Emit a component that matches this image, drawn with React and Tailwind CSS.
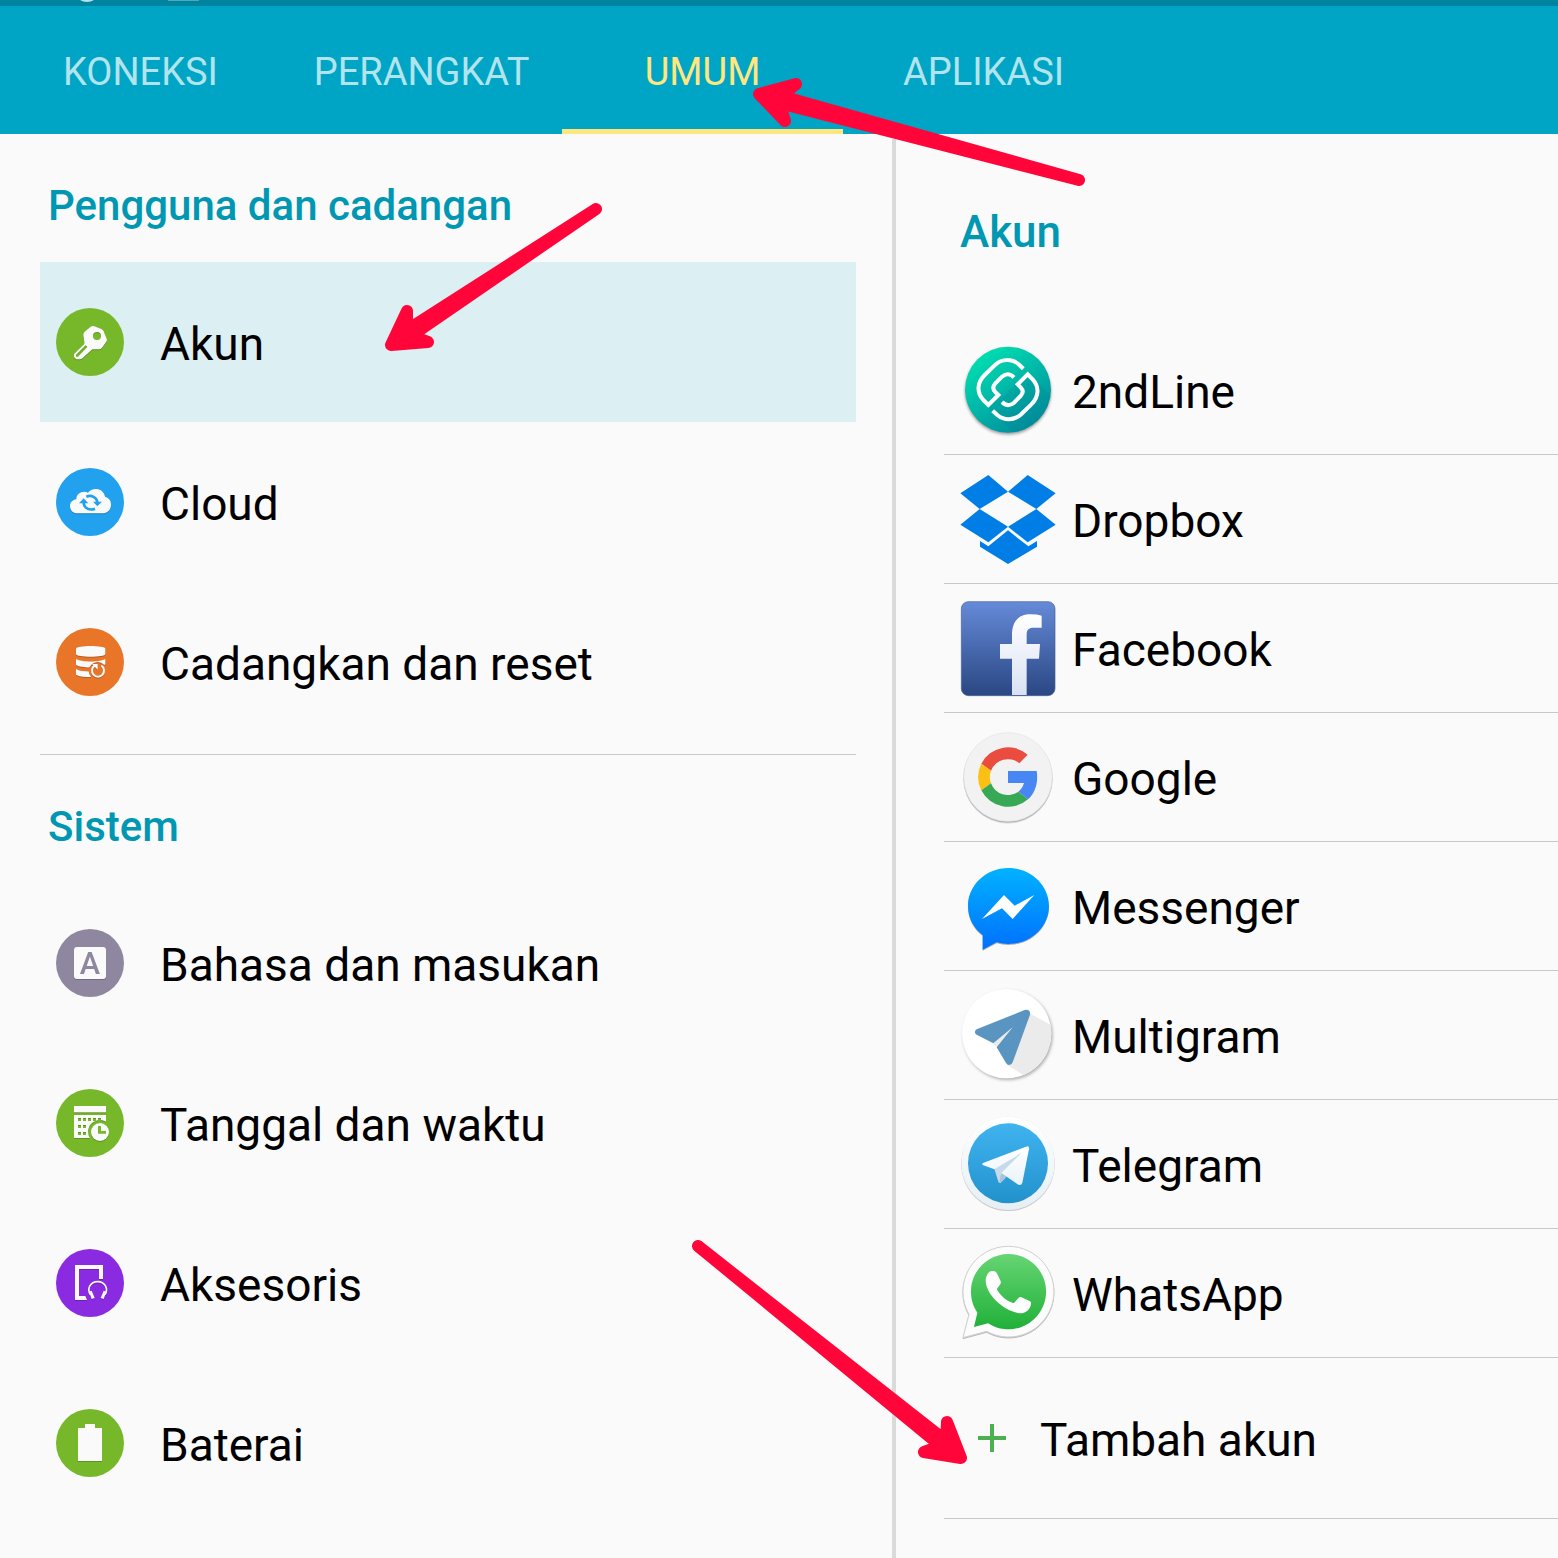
import { useState } from 'react';
import clsx from 'clsx';

/* Settings icons: 204 x 204 drawings on a coloured disc */

const SettingIcon = ({ color, children }) => (
  <svg viewBox="0 0 204 204" className="size-[68px] shrink-0" aria-hidden="true">
    <circle cx="102" cy="102" r="102" fill={color} />
    <g fill="#fafafa" className="drop-shadow-[0_2px_1px_rgba(0,0,0,0.3)]">
      {children}
    </g>
  </svg>
);

const KeyIcon = () => (
  <SettingIcon color="#76b82a">
    <path
      fillRule="evenodd"
      d="M104 56Q109 52 115 55L136 63Q141 65 143 70L152 92Q154 97 151 101L138 119Q134 124 128 124H109L80 150Q76 154 71 154H61L54 147V138L83 110Q86 107 85 102L82 82Q81 76 86 71ZM123 72a12 12 0 1 0 0 24a12 12 0 1 0 0-24ZM60 141V146H66L94 117L89 112Z"
    />
  </SettingIcon>
);

const CloudIcon = () => (
  <SettingIcon color="#21a1ee">
    <path d="M64 136C50 136 42 126 42 114C42 103 50 96 61 94C61 76 80 67 96 74C106 58 142 57 147 86C159 89 165 99 165 110C165 126 154 136 140 136Z" />
    <g fill="none" stroke="#21a1ee" strokeWidth="8">
      <path d="M91 86C106 80 123 88 124 103" />
      <path d="M117 122C101 129 84 120 83 105" />
    </g>
    <path fill="#21a1ee" d="M111 101H138L124 115ZM69 106H97L83 91Z" />
  </SettingIcon>
);

const BackupIcon = () => (
  <SettingIcon color="#e97528">
    <mask id="backup-gap">
      <rect width="204" height="204" fill="#fff" />
      <circle cx="125" cy="129" r="27" fill="#000" />
    </mask>
    <g mask="url(#backup-gap)">
      <path d="M60 62C60 51 148 51 148 62V78C148 89 60 89 60 78Z" />
      <path d="M60 93C76 103 132 103 148 93V109C132 121 76 121 60 111Z" />
      <path d="M60 123C72 130 92 131 110 130V147C90 148 68 146 60 140Z" />
    </g>
    <path d="M116 113A18 18 0 1 0 136 113" fill="none" stroke="#fafafa" strokeWidth="6" />
    <path d="M108 108H125V125Z" />
  </SettingIcon>
);

const LanguageIcon = () => (
  <SettingIcon color="#8f879f">
    <rect x="54" y="54" width="96" height="96" rx="9" />
    <text x="102" y="135" textAnchor="middle" fill="#8f879f" className="font-['Roboto'] text-[92px] font-medium">
      A
    </text>
  </SettingIcon>
);

const CALENDAR_DOTS = [
  [66, 87], [81, 87], [96, 87], [111, 87], [126, 87],
  [66, 108], [81, 108],
  [66, 129], [81, 129],
];

const CalendarIcon = () => (
  <SettingIcon color="#76b82a">
    <mask id="calendar-gap">
      <rect width="204" height="204" fill="#fff" />
      {CALENDAR_DOTS.map(([x, y]) => (
        <rect key={`${x}-${y}`} x={x} y={y} width="9" height="9" fill="#000" />
      ))}
      <circle cx="132" cy="129" r="36" fill="#000" />
    </mask>
    <rect x="54" y="51" width="96" height="19" />
    <rect x="54" y="78" width="96" height="69" mask="url(#calendar-gap)" />
    <circle cx="132" cy="129" r="27" />
    <path fill="#76b82a" d="M126 111H135V126H150V134H126Z" />
  </SettingIcon>
);

const AccessoryIcon = () => (
  <SettingIcon color="#8a2be2">
    <path d="M57 48H141V90H129V60H69V141H88L93 153H57Z" />
    <path
      d="M103 137C92 119 103 98 125 98C147 98 158 119 147 137"
      fill="none"
      stroke="#fafafa"
      strokeWidth="5"
    />
    <path d="M99 128L107 125L116 147L107 150ZM151 128L143 125L134 147L143 150Z" />
  </SettingIcon>
);

const BatteryIcon = () => (
  <SettingIcon color="#76b82a">
    <path d="M87 45H117V57H138V156H66V57H87Z" />
  </SettingIcon>
);

/* Account logos: 288 x 288 drawings */

const Logo = ({ children }) => (
  <svg viewBox="0 0 288 288" className="size-24 shrink-0 overflow-visible" aria-hidden="true">
    {children}
  </svg>
);

const Gradient = ({ id, from, to, diagonal }) => (
  <linearGradient id={id} x1={diagonal ? '0.2' : '0'} y1={diagonal ? '0.1' : '0'} x2={diagonal ? '0.8' : '0'} y2="1">
    <stop offset="0" stopColor={from} />
    <stop offset="1" stopColor={to} />
  </linearGradient>
);

const LINK_HALF =
  'M190 80L176 67C156 50 126 50 106 68L74 99C50 123 50 152 70 174L85 189L115 159L106 150C98 142 98 133 106 124L126 104C138 94 150 94 162 106';

const SecondLineLogo = () => (
  <Logo>
    <defs>
      <Gradient id="second-line" from="#00dcb0" to="#008a9c" diagonal />
    </defs>
    <circle cx="144" cy="143" r="129" fill="url(#second-line)" className="drop-shadow-[0_5px_4px_rgba(0,0,0,0.4)]" />
    <path d="M205 94L271 160C262 220 215 262 158 271L85 198Z" fill="#007c92" opacity="0.2" />
    <g fill="none" stroke="#fff" strokeWidth="12">
      <path d={LINK_HALF} />
      <path d={LINK_HALF} transform="rotate(180 144 143)" />
    </g>
  </Logo>
);

const DropboxLogo = () => (
  <Logo>
    <path
      fill="#007ee5"
      d="M85 12L144 62L59 114L1 67ZM203 12L144 62L229 114L287 67ZM59 114L144 167L85 214L1 161ZM229 114L144 167L203 214L287 161ZM144 178L205 226L231 210V227L144 279L60 227V210L85 226Z"
    />
  </Logo>
);

const FacebookLogo = () => (
  <Logo>
    <defs>
      <Gradient id="facebook" from="#658ad8" to="#2a4783" />
      <Gradient id="facebook-f" from="#ffffff" to="#d9e1f2" />
    </defs>
    <rect x="4" y="5" width="281" height="282" rx="21" fill="url(#facebook)" stroke="#4a5f92" strokeWidth="2" />
    <path
      fill="url(#facebook-f)"
      d="M156 285V176H120V132H156V104C156 62 178 43 212 43Q232 43 245 47V83H220C206 83 200 89 200 104V132H240L237 176H200V285Z"
    />
  </Logo>
);

const GoogleLogo = () => (
  <Logo>
    <circle cx="144" cy="144" r="133" fill="#f2f2f2" stroke="#e2e2e2" strokeWidth="2" className="drop-shadow-[0_4px_2px_rgba(0,0,0,0.3)]" />
    <path fill="#ea4c3f" d="M203 77A90 90 0 0 0 64 104L93 125A54 54 0 0 1 178 103Z" />
    <path fill="#fbc012" d="M64 104A90 90 0 0 0 64 184L93 163A54 54 0 0 1 93 125Z" />
    <path fill="#37a854" d="M64 184A90 90 0 0 0 204 211L175 188A54 54 0 0 1 93 163Z" />
    <path fill="#4687f4" d="M204 211C224 193 236 162 230 126H144V162H192Q187 179 175 188Z" />
  </Logo>
);

const MessengerLogo = () => (
  <Logo>
    <defs>
      <Gradient id="messenger" from="#00b2ff" to="#0070ff" />
    </defs>
    <path
      fill="url(#messenger)"
      className="drop-shadow-[0_3px_2px_rgba(0,0,0,0.3)]"
      d="M145 30C212 30 267 81 267 144S212 258 145 258Q127 258 110 253L68 275V231C40 210 24 179 24 144C24 81 78 30 145 30Z"
    />
    <path fill="#fff" d="M66 183L132 111L164 143L223 111L158 183L126 151Z" />
  </Logo>
);

const MultigramLogo = () => (
  <Logo>
    <circle cx="140" cy="140" r="134" fill="#fff" className="drop-shadow-[4px_5px_4px_rgba(0,0,0,0.3)]" />
    <path fill="#ebebeb" d="M207 78L271 113C283 176 250 240 190 264L142 234L153 120L158 121L100 169L112 182Z" />
    <path
      fill="#5a95c1"
      d="M50 127L194 69Q202 66 208 72Q212 77 209 86L158 226Q155 234 148 234Q141 234 138 228L110 181L158 121L100 169L50 143Q44 140 45 134Q45 130 50 127Z"
    />
  </Logo>
);

const TelegramLogo = () => (
  <Logo>
    <defs>
      <Gradient id="telegram-rim" from="#ffffff" to="#e6eff5" />
      <Gradient id="telegram" from="#40b3f0" to="#2292cc" />
      <Gradient id="telegram-plane" from="#ffffff" to="#eaf3f9" />
    </defs>
    <circle cx="144" cy="142" r="140" fill="url(#telegram-rim)" className="drop-shadow-[0_2px_2px_rgba(0,0,0,0.3)]" />
    <circle cx="144" cy="142" r="120" fill="url(#telegram)" />
    <path fill="#c8daea" d="M103 158L185 110L128 170L136 186L122 200Q117 203 115 197Z" />
    <path fill="#a9c3da" d="M124 170L140 182L122 201Q117 203 118 196Z" />
    <path
      fill="url(#telegram-plane)"
      d="M69 141L198 92Q209 88 207 99L187 200Q184 210 175 206L124 171L183 112L103 160L70 148Q64 145 69 141Z"
    />
  </Logo>
);

const WhatsAppLogo = () => (
  <Logo>
    <defs>
      <Gradient id="whatsapp" from="#66d573" to="#20b038" />
    </defs>
    <path
      fill="#fcfcfc"
      stroke="#cfcfcf"
      strokeWidth="3"
      className="drop-shadow-[0_3px_2px_rgba(0,0,0,0.25)]"
      d="M145 4A136 136 0 1 1 80 259L9 278L27 208A136 136 0 0 1 145 4Z"
    />
    <path fill="url(#whatsapp)" d="M145 27A113 113 0 1 1 84 235L42 246L52 203A113 113 0 0 1 145 27Z" />
    <path
      fill="#fff"
      d="M77 109C77 93 84 83 92 79Q103 76 108 81Q111 84 122 109Q124 114 119 121L112 130Q110 133 112 136C124 155 140 168 159 174Q162 175 164 172L176 158Q179 155 183 156L210 169Q214 171 213 176C211 193 198 205 179 205C133 199 80 152 77 109Z"
    />
  </Logo>
);

const PlusIcon = () => (
  <svg viewBox="0 0 28 28" className="size-7 shrink-0" aria-hidden="true">
    <path d="M14 0V28M0 14H28" stroke="#4caf50" strokeWidth="4" />
  </svg>
);

const TABS = ['KONEKSI', 'PERANGKAT', 'UMUM', 'APLIKASI'];

const SECTIONS = [
  {
    title: 'Pengguna dan cadangan',
    items: [
      { label: 'Akun', Icon: KeyIcon },
      { label: 'Cloud', Icon: CloudIcon },
      { label: 'Cadangkan dan reset', Icon: BackupIcon },
    ],
  },
  {
    title: 'Sistem',
    items: [
      { label: 'Bahasa dan masukan', Icon: LanguageIcon },
      { label: 'Tanggal dan waktu', Icon: CalendarIcon },
      { label: 'Aksesoris', Icon: AccessoryIcon },
      { label: 'Baterai', Icon: BatteryIcon },
    ],
  },
];

const ACCOUNTS = [
  { label: '2ndLine', Icon: SecondLineLogo },
  { label: 'Dropbox', Icon: DropboxLogo },
  { label: 'Facebook', Icon: FacebookLogo },
  { label: 'Google', Icon: GoogleLogo },
  { label: 'Messenger', Icon: MessengerLogo },
  { label: 'Multigram', Icon: MultigramLogo },
  { label: 'Telegram', Icon: TelegramLogo },
  { label: 'WhatsApp', Icon: WhatsAppLogo },
];

const StatusBar = () => (
  <div className="h-[6px] bg-[#00839e]">
    <svg width="240" height="6" viewBox="0 0 240 6" className="block" aria-hidden="true">
      <circle cx="87" cy="-11" r="13" fill="#b8e2ea" />
      <rect x="168" y="0" width="31" height="1" fill="#4fa9bb" />
    </svg>
  </div>
);

// Hand-drawn pointers laid over the whole screen
const Pointers = () => (
  <svg
    width="1558"
    height="1558"
    viewBox="0 0 1558 1558"
    className="pointer-events-none absolute top-0 left-0"
    fill="#ff0539"
    stroke="#ff0539"
    strokeWidth="12"
    strokeLinejoin="round"
    aria-hidden="true"
  >
    <path d="M759 94L796 84L781 96L1079 180L779 103L785 121Z" />
    <path d="M391 345L407 311L407 330L596 209L411 336L428 342Z" />
    <path d="M961 1458L947 1422L946 1441L698 1246L941 1446L924 1452Z" />
  </svg>
);

export default function App() {
  const [tab, setTab] = useState('UMUM');
  const [selected, setSelected] = useState('Akun');

  return (
    <div className="relative flex min-h-screen flex-col overflow-hidden bg-[#fafafa] font-['Roboto',sans-serif] text-black">
      <StatusBar />

      {/* Tabs */}
      <nav className="flex h-32 bg-[#00a5c5]">
        {TABS.map((name) => (
          <button
            key={name}
            type="button"
            onClick={() => setTab(name)}
            className={clsx(
              'w-[281px] border-y-[5px] border-t-transparent pt-1 text-[38px] leading-10',
              tab === name ? 'border-b-[#ffe680] text-[#ffe680]' : 'border-b-transparent text-[#b2e4ed]'
            )}
          >
            {name}
          </button>
        ))}
      </nav>

      <main className="grid flex-1 grid-cols-[892fr_4px_662fr]">
        {/* Settings list */}
        <div className="min-w-0 pr-9 pl-10">
          {SECTIONS.map((section, index) => (
            <section key={section.title} className={clsx(index > 0 && 'mt-3 border-t border-[#c8c8c8]')}>
              <h2 className="flex h-32 items-center px-2 pt-4 text-[42px] leading-12 font-medium text-[#0097b2]">
                {section.title}
              </h2>
              <ul>
                {section.items.map(({ label, Icon }) => (
                  <li key={label}>
                    <button
                      type="button"
                      onClick={() => setSelected(label)}
                      className={clsx(
                        'flex h-40 w-full items-center gap-9 px-4 text-left text-[46px]',
                        selected === label && 'bg-[#dceff3]'
                      )}
                    >
                      <Icon />
                      <span className="pt-1 leading-14">{label}</span>
                    </button>
                  </li>
                ))}
              </ul>
            </section>
          ))}
        </div>

        <div className="mt-[5px] bg-[#dadada]" />

        {/* Accounts */}
        <section className="min-w-0 pl-12">
          <h2 className="flex h-48 items-center px-4 pt-1 text-[44px] leading-12 font-medium text-[#0097b2]">Akun</h2>
          <ul>
            {ACCOUNTS.map(({ label, Icon }) => (
              <li key={label} className="border-b border-[#c8c8c8]">
                <button type="button" className="flex h-32 w-full items-center gap-4 px-4 text-left text-[46px]">
                  <Icon />
                  <span className="pt-1 leading-14">{label}</span>
                </button>
              </li>
            ))}
            <li className="border-b border-[#c8c8c8]">
              <button type="button" className="flex h-40 w-full items-center gap-[34px] px-[34px] text-left text-[46px]">
                <PlusIcon />
                <span className="pt-1 leading-14">Tambah akun</span>
              </button>
            </li>
          </ul>
        </section>
      </main>

      <Pointers />
    </div>
  );
}
